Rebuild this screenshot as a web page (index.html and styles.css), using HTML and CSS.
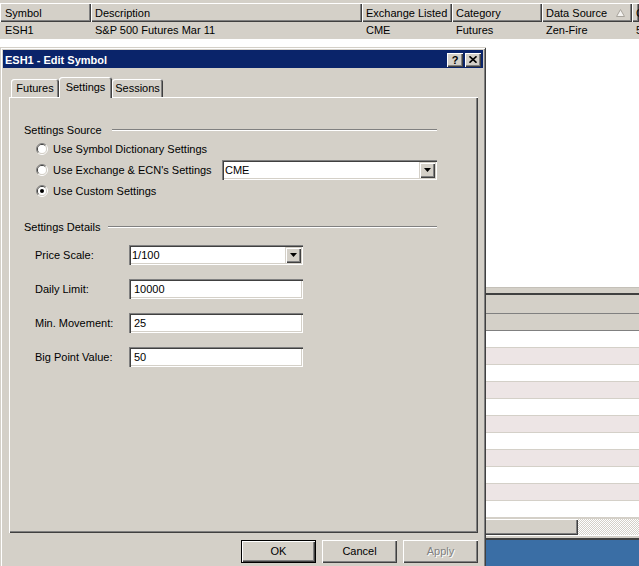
FILE: index.html
```html
<!DOCTYPE html>
<html lang="en">
<head>
    <meta charset="UTF-8">
    <title>ESH1 - Edit Symbol</title>
    <link rel="stylesheet" href="styles.css">
</head>
<body>
    <div class="app">
        <div class="list-top"></div>
        <div class="list-head">
            <div class="col">Symbol</div>
            <div class="col">Description</div>
            <div class="col">Exchange Listed</div>
            <div class="col">Category</div>
            <div class="col col-sorted">Data Source
                <svg class="sort-arrow" width="9" height="8" viewBox="0 0 9 8"><polygon points="4.5,0.5 8.5,7.5 0.5,7.5" fill="#f4f3f0" stroke="#a8a49c"/></svg>
            </div>
            <div class="col">Currency</div>
        </div>
        <div class="list-row">
            <div class="cell">ESH1</div>
            <div class="cell">S&amp;P 500 Futures Mar 11</div>
            <div class="cell">CME</div>
            <div class="cell">Futures</div>
            <div class="cell">Zen-Fire</div>
            <div class="cell">50</div>
        </div>
        <div class="list-fill"></div>

        <!-- lower grid, mostly hidden behind the dialog -->
        <div class="grid-edge"></div>
        <div class="grid-head"></div>
        <div class="grid-head grid-head-sub"></div>
        <div class="grid-rows">
            <div class="grid-row"></div>
            <div class="grid-row"></div>
            <div class="grid-row"></div>
            <div class="grid-row"></div>
            <div class="grid-row"></div>
            <div class="grid-row"></div>
            <div class="grid-row"></div>
            <div class="grid-row"></div>
            <div class="grid-row"></div>
            <div class="grid-row"></div>
            <div class="grid-row"></div>
        </div>
        <div class="hscroll">
            <div class="hscroll-thumb"></div>
            <div class="hscroll-track"></div>
        </div>
        <div class="grid-foot"></div>
        <div class="desktop"></div>
    </div>

    <div class="dialog">
        <div class="titlebar">
            <div class="title-text">ESH1 - Edit Symbol</div>
            <div class="title-btns">
                <div class="title-btn">?</div>
                <div class="title-btn">
                    <svg width="8" height="7" viewBox="0 0 8 7"><path d="M0.5 0.3L7.5 6.7M7.5 0.3L0.5 6.7" stroke="#000" stroke-width="1.6"/></svg>
                </div>
            </div>
        </div>

        <div class="tabs">
            <div class="tab tab-futures">Futures</div>
            <div class="tab tab-settings active">Settings</div>
            <div class="tab tab-sessions">Sessions</div>
        </div>

        <div class="tab-panel">
            <div class="group-title">Settings Source<span class="rule"></span></div>

            <div class="radios">
                <div class="radio-row">
                    <svg class="radio" viewBox="0 0 12 12">
                        <path d="M2.1 9.9A5.5 5.5 0 0 1 9.9 2.1" fill="none" stroke="#808080"/>
                        <path d="M9.9 2.1A5.5 5.5 0 0 1 2.1 9.9" fill="none" stroke="#fff"/>
                        <path d="M2.8 9.2A4.5 4.5 0 0 1 9.2 2.8" fill="none" stroke="#404040"/>
                        <path d="M9.2 2.8A4.5 4.5 0 0 1 2.8 9.2" fill="none" stroke="#d4d0c8"/>
                        <circle cx="6" cy="6" r="4" fill="#fff"/>
                    </svg>
                    <span>Use Symbol Dictionary Settings</span>
                </div>
                <div class="radio-row">
                    <svg class="radio" viewBox="0 0 12 12">
                        <path d="M2.1 9.9A5.5 5.5 0 0 1 9.9 2.1" fill="none" stroke="#808080"/>
                        <path d="M9.9 2.1A5.5 5.5 0 0 1 2.1 9.9" fill="none" stroke="#fff"/>
                        <path d="M2.8 9.2A4.5 4.5 0 0 1 9.2 2.8" fill="none" stroke="#404040"/>
                        <path d="M9.2 2.8A4.5 4.5 0 0 1 2.8 9.2" fill="none" stroke="#d4d0c8"/>
                        <circle cx="6" cy="6" r="4" fill="#fff"/>
                    </svg>
                    <span class="radio-label-wide">Use Exchange &amp; ECN's Settings</span>
                    <div class="combo combo-source">
                        <span class="combo-text">CME</span>
                        <div class="combo-btn"><svg width="7" height="4" viewBox="0 0 7 4"><polygon points="0,0 7,0 3.5,4" fill="#000"/></svg></div>
                    </div>
                </div>
                <div class="radio-row">
                    <svg class="radio" viewBox="0 0 12 12">
                        <path d="M2.1 9.9A5.5 5.5 0 0 1 9.9 2.1" fill="none" stroke="#808080"/>
                        <path d="M9.9 2.1A5.5 5.5 0 0 1 2.1 9.9" fill="none" stroke="#fff"/>
                        <path d="M2.8 9.2A4.5 4.5 0 0 1 9.2 2.8" fill="none" stroke="#404040"/>
                        <path d="M9.2 2.8A4.5 4.5 0 0 1 2.8 9.2" fill="none" stroke="#d4d0c8"/>
                        <circle cx="6" cy="6" r="4" fill="#fff"/>
                        <circle cx="6" cy="6" r="2" fill="#000"/>
                    </svg>
                    <span>Use Custom Settings</span>
                </div>
            </div>

            <div class="group-title group-details">Settings Details<span class="rule"></span></div>

            <div class="fields">
                <div class="field-row">
                    <span class="field-label">Price Scale:</span>
                    <div class="combo combo-scale">
                        <span class="combo-text">1/100</span>
                        <div class="combo-btn"><svg width="7" height="4" viewBox="0 0 7 4"><polygon points="0,0 7,0 3.5,4" fill="#000"/></svg></div>
                    </div>
                </div>
                <div class="field-row">
                    <span class="field-label">Daily Limit:</span>
                    <div class="input">10000</div>
                </div>
                <div class="field-row">
                    <span class="field-label">Min. Movement:</span>
                    <div class="input">25</div>
                </div>
                <div class="field-row">
                    <span class="field-label">Big Point Value:</span>
                    <div class="input">50</div>
                </div>
            </div>
        </div>

        <div class="dialog-buttons">
            <div class="btn btn-default">OK</div>
            <div class="btn">Cancel</div>
            <div class="btn btn-disabled">Apply</div>
        </div>
    </div>
</body>
</html>
```

FILE: styles.css
```css
* {
    margin: 0;
    padding: 0;
    box-sizing: border-box;
}
body {
    width: 639px;
    height: 566px;
    overflow: hidden;
    position: relative;
    font-family: 'Liberation Sans', Tahoma, Arial, sans-serif;
    font-size: 11px;
    color: #000;
    background-color: #fff;
}
.app {
    display: flex;
    flex-direction: column;
    height: 566px;
}

/* Symbol list */
.list-top {
    height: 3px;
    background-color: #d4d0c8;
}
.list-head,
.list-row {
    display: grid;
    grid-template-columns: 91px 271px 90px 90px 90px 1fr;
}
.list-head {
    height: 19px;
    background-color: #d4d0c8;
}
.col {
    padding-left: 4px;
    line-height: 21px;
    white-space: nowrap;
    overflow: hidden;
    box-shadow: inset 1px 1px #fff, inset -1px -1px #404040, inset -2px -2px #808080;
}
.col:first-child,
.cell:first-child {
    padding-left: 5px;
}
.col-sorted {
    display: flex;
    justify-content: space-between;
    align-items: center;
    padding-top: 1px;
    padding-right: 7px;
}
.list-row {
    height: 17px;
    line-height: 17px;
    background-color: #d4d0c8;
}
.cell {
    padding-left: 4px;
    white-space: nowrap;
    overflow: hidden;
}
.list-fill {
    height: 248px;
    background-color: #fff;
}

/* Lower grid */
.grid-edge {
    height: 8px;
    background-color: #d4d0c8;
    border-top: 1px solid #c4c0b8;
    border-bottom: 2px solid #404040;
}
.grid-head {
    height: 19px;
    background-color: #d4d0c8;
    border-bottom: 1px solid #808080;
}
.grid-head-sub {
    height: 17px;
}
.grid-row {
    height: 17px;
    background-color: #fff;
    border-bottom: 1px solid #d4d0c8;
}
.grid-row:nth-child(even) {
    background-color: #ede5e5;
}
.hscroll {
    display: flex;
    height: 17px;
    border-top: 1px solid #d4d0c8;
}
.hscroll-thumb {
    width: 578px;
    background-color: #d4d0c8;
    box-shadow: inset 1px 1px #fff, inset -1px -1px #404040, inset -2px -2px #808080;
}
.hscroll-track {
    flex: 1;
    background: repeating-conic-gradient(#fff 0 25%, #d4d0c8 0 50%) 0 0 / 2px 2px;
}
.grid-foot {
    height: 5px;
    background-color: #d4d0c8;
    border-top: 1px solid #fff;
    border-bottom: 2px solid #404040;
}
.desktop {
    flex: 1;
    background-color: #3a6ea5;
}

/* Edit Symbol dialog */
.dialog {
    position: absolute;
    left: 0;
    top: 47px;
    width: 486px;
    height: 530px;
    padding: 3px;
    background-color: #d4d0c8;
    box-shadow: inset 1px 1px #d4d0c8, inset -1px -1px #404040, inset 2px 2px #fff, inset -2px -2px #808080;
}
.titlebar {
    display: flex;
    align-items: center;
    height: 18px;
    padding: 1px 2px 0;
    background-color: #0a246a;
    color: #fff;
    font-weight: bold;
}
.title-text {
    flex: 1;
}
.title-btns {
    display: flex;
    gap: 2px;
}
.title-btn {
    width: 16px;
    height: 14px;
    display: flex;
    align-items: center;
    justify-content: center;
    background-color: #d4d0c8;
    color: #000;
    font-weight: bold;
    box-shadow: inset 1px 1px #fff, inset -1px -1px #404040, inset -2px -2px #808080;
}

.tabs {
    display: flex;
    align-items: flex-end;
    height: 20px;
    margin: 9px 0 0 8px;
    position: relative;
    z-index: 1;
}
.tab {
    height: 18px;
    line-height: 19px;
    text-align: center;
    background-color: #d4d0c8;
    border-radius: 3px 3px 0 0;
    box-shadow: inset 1px 1px #fff, inset -1px 0 #404040, inset -2px 0 #808080;
}
.tab-futures { width: 48px; }
.tab-settings { width: 53px; }
.tab-sessions { width: 51px; }
.tab.active {
    height: 21px;
    line-height: 20px;
    margin-bottom: -1px;
}

.tab-panel {
    height: 436px;
    margin: 0 5px 0 6px;
    padding: 26px 41px 0 15px;
    box-shadow: inset 1px 1px #fff, inset -1px -1px #404040, inset -2px -2px #808080;
}
.group-title {
    display: flex;
    align-items: center;
    height: 13px;
}
.group-title .rule {
    flex: 1;
    margin-left: 10px;
    border-top: 1px solid #808080;
    border-bottom: 1px solid #fff;
}
.group-details {
    margin-top: 19px;
}
.group-details .rule {
    margin-left: 8px;
}

.radios {
    margin-top: 2px;
}
.radio-row {
    display: flex;
    align-items: center;
    height: 21px;
    padding-left: 12px;
}
.radio {
    width: 12px;
    height: 12px;
    margin-right: 5px;
    flex: none;
}
.radio-label-wide {
    width: 169px;
}

.combo {
    display: flex;
    align-items: center;
    height: 20px;
    padding-left: 3px;
    background-color: #fff;
    box-shadow: inset 1px 1px #808080, inset 2px 2px #404040, inset -1px -1px #fff, inset -2px -2px #d4d0c8;
}
.combo-source { width: 215px; }
.combo-scale { width: 174px; }
.combo-text {
    flex: 1;
}
.combo-btn {
    width: 16px;
    height: 16px;
    margin-right: 2px;
    display: flex;
    align-items: center;
    justify-content: center;
    background-color: #d4d0c8;
    box-shadow: inset 1px 1px #d4d0c8, inset 2px 2px #fff, inset -1px -1px #404040, inset -2px -2px #808080;
}

.fields {
    display: flex;
    flex-direction: column;
    gap: 14px;
    margin-top: 12px;
}
.field-row {
    display: flex;
    align-items: center;
    padding-left: 11px;
}
.field-label {
    width: 94px;
}
.input {
    width: 174px;
    height: 20px;
    line-height: 20px;
    padding-left: 5px;
    background-color: #fff;
    box-shadow: inset 1px 1px #808080, inset 2px 2px #404040, inset -1px -1px #fff, inset -2px -2px #d4d0c8;
}

.dialog-buttons {
    display: flex;
    justify-content: flex-end;
    gap: 6px;
    margin-top: 7px;
    padding-right: 5px;
}
.btn {
    width: 75px;
    height: 23px;
    line-height: 23px;
    text-align: center;
    background-color: #d4d0c8;
    box-shadow: inset 1px 1px #fff, inset -1px -1px #404040, inset -2px -2px #808080;
}
.btn-default {
    box-shadow: inset 0 0 0 1px #000, inset 2px 2px #fff, inset -2px -2px #404040, inset -3px -3px #808080;
}
.btn-disabled {
    color: #808080;
    text-shadow: 1px 1px #fff;
}
```
